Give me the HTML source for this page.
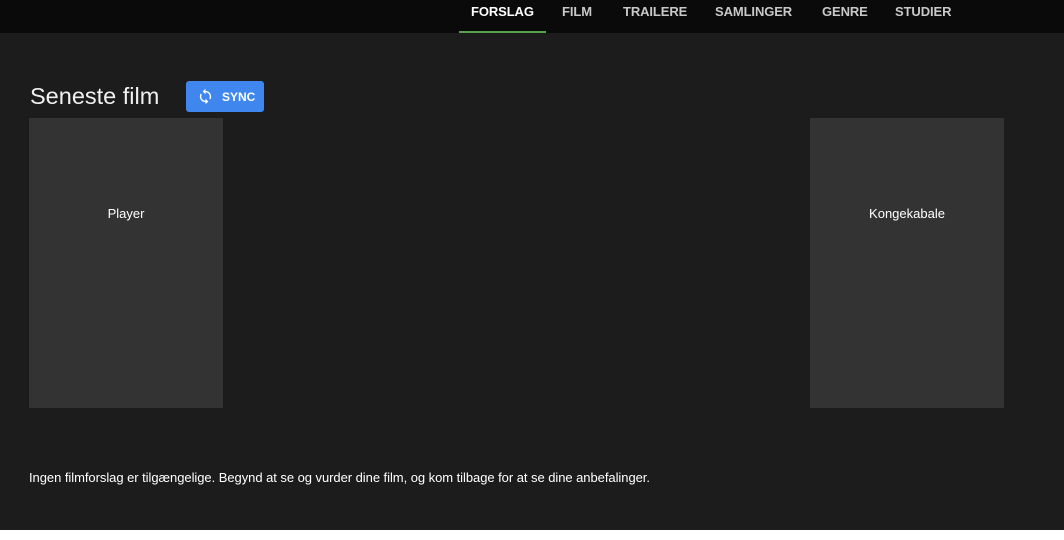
<!DOCTYPE html>
<html><head><style>
*{margin:0;padding:0;box-sizing:border-box}
body{width:1064px;height:540px;background:#fff;font-family:"Liberation Sans",sans-serif;position:relative;overflow:hidden}
.main{position:absolute;left:0;top:0;width:1064px;height:530px;background:#1c1c1c}
.nav{position:absolute;left:0;top:0;width:1064px;height:33px;background:#0a0a0a}
.nav span{position:absolute;top:4px;font-size:13px;font-weight:bold;color:#c8c8c8;letter-spacing:-0.1px}
.ul{position:absolute;left:459px;top:31px;width:87px;height:2px;background:#5aa04e}
h1{position:absolute;left:30px;top:83px;font-size:23.5px;font-weight:normal;color:#f0f0f0}
.btn{position:absolute;left:186px;top:81px;width:78px;height:31px;background:#3f86ef;border-radius:3px;color:#fff;font-size:12px;font-weight:bold}
.btn span{position:absolute;left:36px;top:9px}
.card{position:absolute;top:118px;width:194px;height:290px;background:#333;color:#fff;font-size:13px;text-align:center;padding-top:88px}
p{position:absolute;left:29px;top:470px;font-size:13px;color:#fff;letter-spacing:-0.05px}
</style></head><body>
<div class="main">
<div class="nav">
<span style="left:471px;color:#fff">FORSLAG</span>
<span style="left:562px">FILM</span>
<span style="left:623px">TRAILERE</span>
<span style="left:715px">SAMLINGER</span>
<span style="left:822px">GENRE</span>
<span style="left:895px">STUDIER</span>
<div class="ul"></div>
</div>
<h1>Seneste film</h1>
<div class="btn"><svg style="position:absolute;left:11px;top:7px" width="17" height="17" viewBox="0 0 24 24"><path fill="#fff" d="M12 4V1L8 5l4 4V6c3.31 0 6 2.69 6 6 0 1.01-.25 1.970-.7 2.8l1.46 1.46C19.54 15.03 20 13.57 20 12c0-4.420-3.58-8-8-8zm0 14c-3.31 0-6-2.69-6-6 0-1.01.25-1.97.7-2.8L5.24 7.74C4.46 8.97 4 10.43 4 12c0 4.42 3.58 8 8 8v3l4-4-4-4v3z"/></svg><span>SYNC</span></div>
<div class="card" style="left:29px">Player</div>
<div class="card" style="left:810px">Kongekabale</div>
<p>Ingen filmforslag er tilgængelige. Begynd at se og vurder dine film, og kom tilbage for at se dine anbefalinger.</p>
</div>
</body></html>
